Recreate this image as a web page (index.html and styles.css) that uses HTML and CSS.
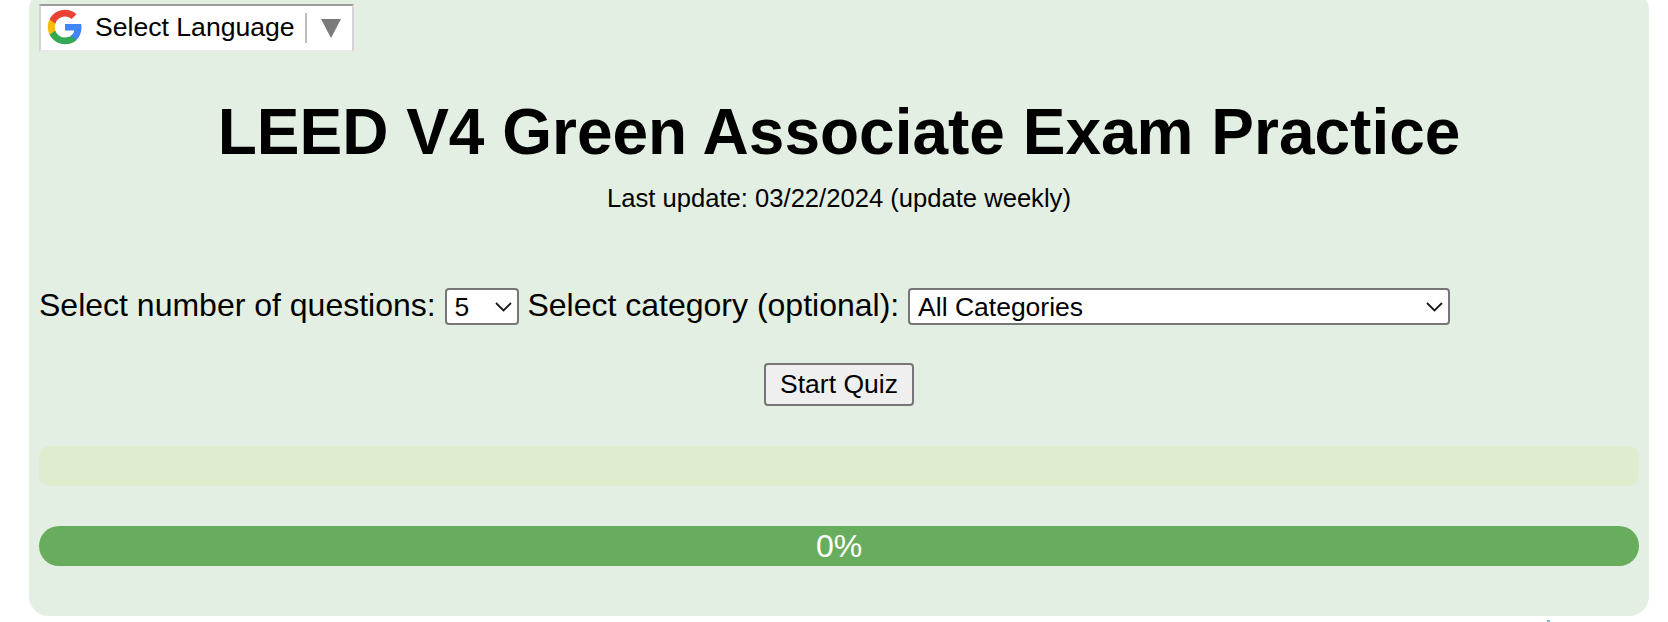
FILE: index.html
```html
<!DOCTYPE html>
<html lang="en">
<head>
<meta charset="utf-8">
<title>LEED V4 Green Associate Exam Practice</title>
<link rel="stylesheet" href="styles.css">
</head>
<body>
<main class="panel">
  <div class="translate">
    <svg class="g-logo" viewBox="0 0 48 48" aria-hidden="true">
      <path fill="#4285f4" d="M46 24.500c0-1.600-.1-3.100-.4-4.500H24v8.700h12.400c-.5 2.800-2.100 5.200-4.500 6.800v5.700h7.300C43.500 36.800 46 31.200 46 24.500z"/>
      <path fill="#34a853" d="M24 47c6.200 0 11.400-2 15.200-5.500l-7.300-5.700c-2 1.400-4.700 2.200-7.900 2.200-6 0-11.100-4.100-12.900-9.500H3.500v5.900C7.300 41.900 15 47 24 47z"/>
      <path fill="#fbbc05" d="M11.100 28.500c-.5-1.400-.7-2.900-.7-4.500s.3-3.100.7-4.500v-5.900H3.500C2 16.700 1 20.200 1 24s1 7.300 2.500 10.400z"/>
      <path fill="#ea4335" d="M24 10c3.400 0 6.400 1.200 8.800 3.400l6.500-6.500C35.400 3.300 30.200 1 24 1 15 1 7.300 6.100 3.500 13.600l7.600 5.900C12.900 14.100 18 10 24 10z"/>
    </svg>
    <span class="translate-label">Select Language</span>
    <span class="translate-sep"></span>
    <span class="translate-arrow"></span>
  </div>
  <h1 class="title">LEED V4 Green Associate Exam Practice</h1>
  <p class="updated">Last update: 03/22/2024 (update weekly)</p>
  <div class="controls">
    <label class="control-label" for="count">Select number of questions:</label>
    <span class="select-wrap count-wrap">
      <select class="select" id="count"><option>5</option><option>10</option></select>
      <svg class="chevron" viewBox="0 0 17 10" aria-hidden="true"><path d="M1 1l7.500 7.500L16 1"/></svg>
    </span>
    <label class="control-label" for="category">Select category (optional):</label>
    <span class="select-wrap category-wrap">
      <select class="select" id="category"><option>All Categories</option></select>
      <svg class="chevron" viewBox="0 0 17 10" aria-hidden="true"><path d="M1 1l7.500 7.500L16 1"/></svg>
    </span>
  </div>
  <div class="start-row"><button class="start" type="button">Start Quiz</button></div>
  <div class="quiz-area"></div>
  <div class="progress">0%</div>
</main>
<span class="edge-mark"></span>
</body>
</html>
```
FILE: styles.css
```css
html, body { height: 100%; }
body {
  position: relative;
  margin: 0;
  overflow: hidden;
  background: #fff;
  color: #000;
  font-family: "Liberation Sans", Arial, sans-serif;
}
.panel {
  box-sizing: border-box;
  width: 1620px;
  height: 626px;
  margin: -10px 0 0 29px;
  padding: 14px 10px 0;
  background: #e4efe3;
  border-radius: 20px;
}
.edge-mark {
  position: absolute;
  top: 620px;
  left: 1547px;
  width: 3px;
  height: 2px;
  background: #7db8d2;
}
.translate {
  box-sizing: border-box;
  display: flex;
  align-items: center;
  width: 315px;
  height: 48px;
  padding-left: 6px;
  background: #fff;
  border-style: solid;
  border-width: 2px;
  border-color: #9b9b9b #d5d5d5 #e8e8e8 #d5d5d5;
}
.g-logo { width: 36px; height: 36px; margin-bottom: 3px; flex: none; }
.translate-label { margin-left: 12px; padding-bottom: 2px; font-size: 26.600px; white-space: nowrap; }
.translate-sep { width: 2px; height: 30px; margin-left: 10px; background: #bbb; }
.translate-arrow {
  width: 0;
  height: 0;
  margin-left: 14px;
  border-left: 10px solid transparent;
  border-right: 10px solid transparent;
  border-top: 19px solid #7a7a7a;
}
.title {
  margin: 43px 0 0;
  font-size: 64px;
  line-height: 74px;
  font-weight: 700;
  text-align: center;
}
.updated {
  margin: 15px 0 0;
  font-size: 25.600px;
  line-height: 29px;
  text-align: center;
}
.controls {
  display: flex;
  align-items: center;
  gap: 8.900px;
  height: 37px;
  margin-top: 75px;
}
.control-label { padding-bottom: 3px; font-size: 32px; white-space: nowrap; }
.select-wrap { position: relative; display: block; height: 37px; }
.count-wrap { width: 74px; }
.category-wrap { width: 542px; }
.select {
  box-sizing: border-box;
  display: block;
  width: 100%;
  height: 100%;
  padding: 0 0 0 8px;
  appearance: none;
  font-family: inherit;
  font-size: 26.500px;
  background: #fff;
  color: #000;
  border: 2px solid #767676;
  border-radius: 4px;
}
.chevron {
  position: absolute;
  top: 14px;
  right: 7px;
  width: 17px;
  height: 10px;
  pointer-events: none;
  fill: none;
  stroke: #1a1a1a;
  stroke-width: 1.800;
}
.start-row { display: flex; justify-content: center; margin-top: 38px; }
.start {
  box-sizing: border-box;
  width: 150px;
  height: 43px;
  padding: 0;
  font-family: inherit;
  font-size: 26.500px;
  background: #efefef;
  color: #000;
  border: 2px solid #767676;
  border-radius: 4px;
}
.quiz-area {
  height: 40px;
  margin-top: 40px;
  background: #dfecce;
  border-radius: 10px;
}
.progress {
  height: 40px;
  margin-top: 40px;
  background: #68ad5d;
  color: #fff;
  border-radius: 20px;
  font-size: 32px;
  line-height: 40px;
  text-align: center;
}
```
